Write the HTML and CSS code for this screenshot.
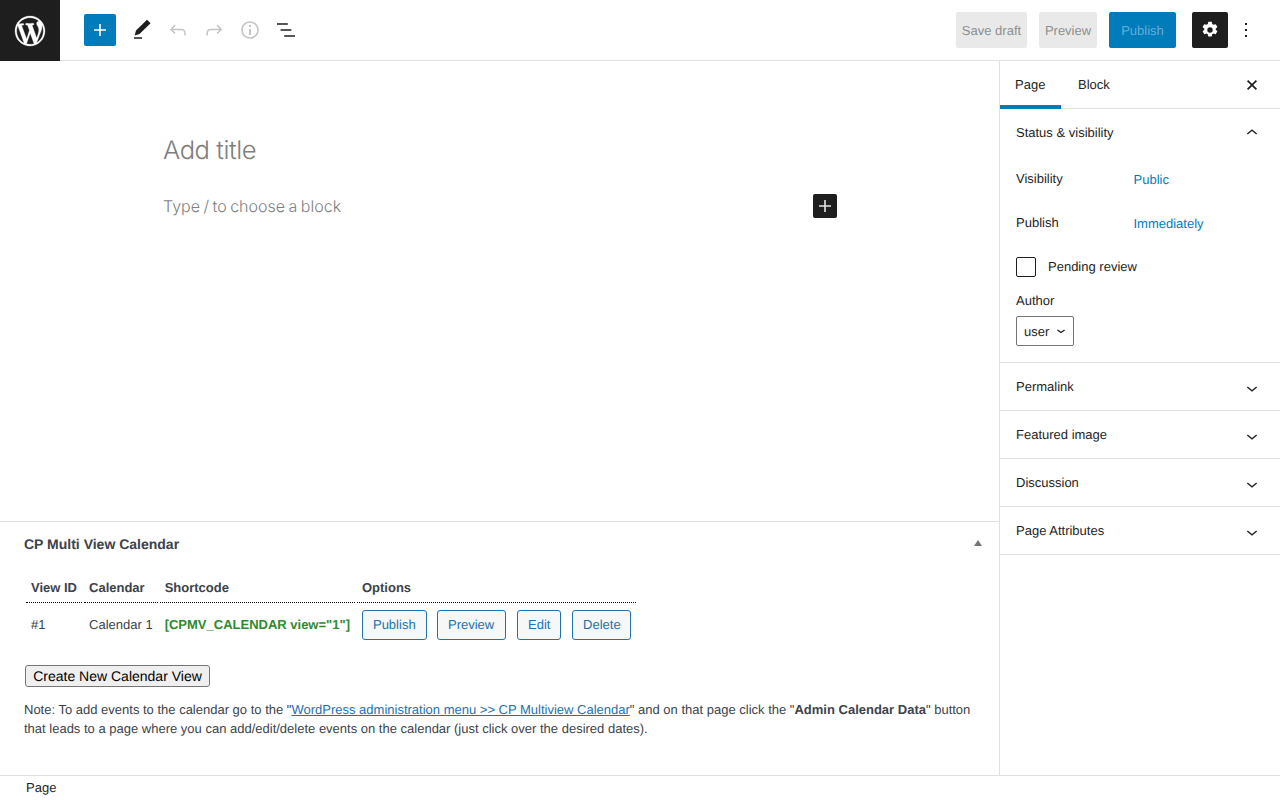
FILE: index.html
```html
<!DOCTYPE html>
<html lang="en">
<head>
<meta charset="utf-8">
<title>Edit Page</title>
<link rel="stylesheet" href="styles.css">
</head>
<body>
<div class="app">
  <header class="topbar">
    <div class="wp-logo">
      <svg width="36" height="36" viewBox="-2 -2 24 24"><path fill="#fff" stroke="#fff" stroke-width=".2" d="M20 10c0-5.51-4.49-10-10-10C4.48 0 0 4.49 0 10c0 5.52 4.48 10 10 10 5.51 0 10-4.48 10-10zM7.78 15.37L4.37 6.22c.55-.02 1.17-.08 1.17-.08.5-.06.44-1.13-.06-1.11 0 0-1.45.11-2.37.11-.18 0-.37 0-.58-.01C4.12 2.69 6.87 1.11 10 1.11c2.33 0 4.45.87 6.05 2.34-.68-.11-1.65.39-1.65 1.58 0 .74.45 1.36.9 2.1.35.61.55 1.36.55 2.46 0 1.49-1.4 5-1.4 5l-3.03-8.37c.54-.02.82-.17.82-.17.5-.05.44-1.25-.06-1.22 0 0-1.44.12-2.38.12-.87 0-2.33-.12-2.33-.12-.5-.03-.56 1.2-.06 1.22l.92.08 1.26 3.41zM17.41 10c.24-.64.74-1.87.43-4.25.7 1.29 1.05 2.71 1.05 4.25 0 3.29-1.73 6.24-4.4 7.78.97-2.59 1.94-5.2 2.92-7.78zM6.1 18.09C3.12 16.65 1.11 13.53 1.11 10c0-1.3.23-2.48.72-3.59C3.25 10.3 4.67 14.2 6.1 18.09zm4.03-6.63l2.58 6.98c-.86.29-1.76.45-2.71.45-.79 0-1.57-.11-2.29-.33.81-2.38 1.62-4.74 2.42-7.1z"/></svg>
    </div>
    <div class="tools">
      <span class="add-btn"><svg width="24" height="24" viewBox="0 0 24 24"><path fill="#fff" d="M18 11.2h-5.2V6h-1.6v5.2H6v1.6h5.2V18h1.6v-5.2H18z"/></svg></span>
      <span class="tool"><svg width="24" height="24" viewBox="0 0 24 24"><path fill="#1e1e1e" d="M20.6 5.2L17 1.8 6 12.6l-1.3 4.8 4.8-1.3zM4 20.8h8v-1.5H4v1.5z"/></svg></span>
      <span class="tool"><svg width="24" height="24" viewBox="0 0 24 24"><path fill="#c4c4c4" d="M18.3 11.7c-.6-.6-1.4-.9-2.3-.9H6.7l2.9-3.3-1.1-1-4.5 5L8.5 16l1-1-2.7-2.7H16c.5 0 .9.2 1.3.5 1 1 1 3.4 1 4.5v.3h1.5v-.2c0-1.5 0-4.3-1.5-5.7z"/></svg></span>
      <span class="tool"><svg width="24" height="24" viewBox="0 0 24 24"><path fill="#c4c4c4" d="M15.6 6.5l-1.1 1 2.9 3.3H8c-.9 0-1.7.3-2.3.9-1.4 1.5-1.4 4.2-1.4 5.6v.2h1.5v-.3c0-1.1 0-3.5 1-4.5.3-.3.7-.5 1.3-.5h9.2L14.5 15l1.1 1.1 4.6-4.6-4.6-5z"/></svg></span>
      <span class="tool"><svg width="24" height="24" viewBox="0 0 24 24"><path fill="#c4c4c4" d="M12 3.2c-4.8 0-8.8 3.9-8.8 8.8 0 4.8 3.9 8.8 8.8 8.8 4.8 0 8.8-3.9 8.8-8.8 0-4.8-4-8.8-8.8-8.8zm0 16c-4 0-7.2-3.3-7.2-7.2C4.8 8 8 4.8 12 4.8s7.2 3.3 7.2 7.2c0 4-3.2 7.2-7.2 7.2zM11 17h2v-6h-2v6zm0-8h2V7h-2v2z"/></svg></span>
      <span class="tool"><svg width="24" height="24" viewBox="0 0 24 24"><path fill="#1e1e1e" d="M13.8 5.2H3v1.5h10.8V5.2zm-3.6 12v1.5H21v-1.5H10.2zm7.2-6H6.6v1.5h10.8v-1.5z"/></svg></span>
    </div>
    <div class="actions">
      <span class="btn-grey save">Save draft</span>
      <span class="btn-grey prev">Preview</span>
      <span class="btn-publish">Publish</span>
      <span class="gear"><svg width="24" height="24" viewBox="0 0 24 24"><path fill="#fff" fill-rule="evenodd" d="M10.3 3.8h3.4l.5 2.3 1.3.75 2.2-.72 1.7 2.94-1.7 1.6v1.06l1.7 1.6-1.7 2.94-2.2-.72-1.3.75-.5 2.3h-3.4l-.5-2.3-1.3-.75-2.2.72-1.7-2.94 1.7-1.6v-1.06l-1.7-1.6 1.7-2.94 2.2.72 1.3-.75zM12 9.3a2.7 2.7 0 1 0 0 5.4 2.7 2.7 0 0 0 0-5.4z"/></svg></span>
      <span class="more"><svg width="24" height="24" viewBox="0 0 24 24"><path fill="#1e1e1e" d="M13 19h-2v-2h2v2zm0-6h-2v-2h2v2zm0-6h-2V5h2v2z"/></svg></span>
    </div>
  </header>
  <div class="workspace">
    <main class="editor">
      <div class="canvas">
        <div class="title">Add title</div>
        <div class="block-row">
          <span class="block-hint">Type / to choose a block</span>
          <span class="block-add"><svg width="24" height="24" viewBox="0 0 24 24"><path fill="#e4e4e4" d="M18 11.2h-5.2V6h-1.6v5.2H6v1.6h5.2V18h1.6v-5.2H18z"/></svg></span>
        </div>
      </div>
      <section class="metabox">
        <div class="metabox-head">
          <h2>CP Multi View Calendar</h2>
          <span class="caret"></span>
        </div>
        <table class="views">
          <thead>
            <tr><th>View ID</th><th>Calendar</th><th>Shortcode</th><th>Options</th></tr>
          </thead>
          <tbody>
            <tr>
              <td>#1</td>
              <td>Calendar 1</td>
              <td class="code">[CPMV_CALENDAR view="1"]</td>
              <td class="opts">
                <div class="opt-row"><a class="wp-btn">Publish</a><a class="wp-btn">Preview</a><a class="wp-btn">Edit</a><a class="wp-btn">Delete</a></div>
              </td>
            </tr>
          </tbody>
        </table>
        <button class="create" type="button">Create New Calendar View</button>
        <p class="note">Note: To add events to the calendar go to the "<a class="note-link">WordPress administration menu &gt;&gt; CP Multiview Calendar</a>" and on that page click the "<b>Admin Calendar Data</b>" button that leads to a page where you can add/edit/delete events on the calendar (just click over the desired dates).</p>
      </section>
    </main>
    <aside class="sidebar">
      <div class="tabs">
        <span class="tab active">Page</span>
        <span class="tab">Block</span>
        <span class="close"><svg width="24" height="24" viewBox="0 0 24 24"><path fill="none" stroke="#1e1e1e" stroke-width="1.7" d="M7.6 7.6l8.8 8.8M16.4 7.6l-8.8 8.8"/></svg></span>
      </div>
      <section class="panel open">
        <div class="panel-head">
          <span>Status &amp; visibility</span>
          <svg width="24" height="24" viewBox="0 0 24 24"><path fill="#1e1e1e" d="M6.9 12.4L12 8.2l5.1 4.2-.9 1.1L12 10.1l-4.2 3.4z"/></svg>
        </div>
        <div class="meta-row vis"><span class="meta-label">Visibility</span><span class="meta-link">Public</span></div>
        <div class="meta-row pub"><span class="meta-label">Publish</span><span class="meta-link">Immediately</span></div>
        <label class="pending"><span class="check"></span><span class="pending-text">Pending review</span></label>
        <div class="author-label">Author</div>
        <div class="select"><span>user</span><svg width="10" height="10" viewBox="0 0 10 10"><path fill="none" stroke="#1e1e1e" stroke-width="1.2" d="M1.4 4l3.6 2.6 3.6-2.6"/></svg></div>
      </section>
      <section class="panel"><div class="panel-head"><span>Permalink</span><svg class="chev" width="24" height="24" viewBox="0 0 24 24"><path fill="#1e1e1e" d="M17.1 11.6L12 15.8l-5.1-4.2.9-1.1 4.2 3.4 4.2-3.4z"/></svg></div></section>
      <section class="panel"><div class="panel-head"><span>Featured image</span><svg class="chev" width="24" height="24" viewBox="0 0 24 24"><path fill="#1e1e1e" d="M17.1 11.6L12 15.8l-5.1-4.2.9-1.1 4.2 3.4 4.2-3.4z"/></svg></div></section>
      <section class="panel"><div class="panel-head"><span>Discussion</span><svg class="chev" width="24" height="24" viewBox="0 0 24 24"><path fill="#1e1e1e" d="M17.1 11.6L12 15.8l-5.1-4.2.9-1.1 4.2 3.4 4.2-3.4z"/></svg></div></section>
      <section class="panel"><div class="panel-head"><span>Page Attributes</span><svg class="chev" width="24" height="24" viewBox="0 0 24 24"><path fill="#1e1e1e" d="M17.1 11.6L12 15.8l-5.1-4.2.9-1.1 4.2 3.4 4.2-3.4z"/></svg></div></section>
    </aside>
  </div>
  <footer class="statusbar">Page</footer>
</div>
</body>
</html>
```
FILE: styles.css
```css
* { box-sizing: border-box; }
html, body { margin: 0; height: 100%; overflow: hidden; background: #fff; }
body { font-family: "Liberation Sans", Arial, sans-serif; font-size: 13px; color: #1e1e1e; text-rendering: geometricPrecision; }
svg { display: block; flex: none; }
.app { display: flex; flex-direction: column; height: 800px; }

.topbar { display: flex; align-items: center; height: 61px; border-bottom: 1px solid #e0e0e0; flex: none; }
.wp-logo { width: 60px; height: 61px; margin-bottom: -1px; background: #1e1e1e; display: flex; align-items: center; justify-content: center; }
.tools { display: flex; align-items: center; margin-left: 24px; }
.add-btn { width: 32px; height: 32px; background: #007cba; border-radius: 2px; display: flex; align-items: center; justify-content: center; margin-right: 8px; }
.tool { width: 36px; height: 36px; display: flex; align-items: center; justify-content: center; }
.actions { margin-left: auto; display: flex; align-items: center; }
.btn-grey { height: 36px; display: flex; align-items: center; justify-content: center; background: #e9e9e9; color: #8f8f8f; border-radius: 2px; }
.save { width: 71px; margin-right: 12px; }
.prev { width: 58px; margin-right: 12px; }
.btn-publish { width: 67px; height: 36px; display: flex; align-items: center; justify-content: center; background: #007cba; color: #66aed8; border-radius: 2px; margin-right: 16px; }
.gear { width: 36px; height: 36px; background: #1e1e1e; border-radius: 2px; display: flex; align-items: center; justify-content: center; }
.more { width: 36px; height: 36px; display: flex; align-items: center; justify-content: center; margin-right: 16px; }

.workspace { flex: 1; display: flex; min-height: 0; }
.editor { flex: 1; min-width: 0; display: flex; flex-direction: column; justify-content: space-between; }
.canvas { height: 460px; padding: 71px 162px 0 163px; }
.title { font-family: Inter, sans-serif; font-weight: 300; font-size: 25.6px; line-height: 38px; color: #7e7e7e; letter-spacing: -.45px; }
.block-row { display: flex; align-items: center; justify-content: space-between; margin-top: 20px; height: 32px; }
.block-hint { font-family: Inter, sans-serif; font-weight: 300; font-size: 16px; color: #7e7e7e; word-spacing: -1px; }
.block-add { width: 24px; height: 24px; background: #1e1e1e; border-radius: 2px; }

.metabox { border-top: 1px solid #e0e0e0; height: 254px; padding: 0 24px; color: #3c434a; }
.metabox-head { display: flex; align-items: center; justify-content: space-between; height: 44px; }
.metabox-head h2 { margin: 0; font-size: 14px; font-weight: 700; color: #3c434a; }
.caret { width: 0; height: 0; border-left: 4px solid transparent; border-right: 4px solid transparent; border-bottom: 6px solid #72777c; margin: 0 -2px 2px 0; position: relative; left: 5px; }
.views { border-collapse: separate; border-spacing: 2px; margin-top: 5px; }
.views th { text-align: left; font-size: 13px; font-weight: 700; padding: 5px; height: 30px; border-bottom: 1px dotted #000; }
.views td { padding: 5px 5px 7px; font-size: 13px; white-space: nowrap; }
.views td.opts { padding: 5px; }
.opt-row { display: flex; gap: 11px; }
.code { font-weight: 700; color: #2e8b2e; }
.wp-btn { display: block; height: 30px; line-height: 28px; padding: 0 10px; font-size: 13px; color: #2271b1; background: #f6f7f7; border: 1px solid #2271b1; border-radius: 3px; }
.wp-btn:first-child { margin-right: -1px; }
.wp-btn:nth-child(2) { padding: 0 10.8px 0 10.4px; }
.wp-btn:nth-child(3) { margin-right: -.4px; }
.wp-btn:nth-child(4) { padding: 0 9.6px 0 10px; }
.create { display: block; margin: 18px 0 0 1px; height: 22px; width: 185px; padding: 0; font-family: "Liberation Sans", Arial, sans-serif; font-size: 14px; color: #000; background: #efefef; border: 1px solid #767676; border-radius: 3px; text-rendering: geometricPrecision; }
.note { margin: 13px 0 0; font-size: 13px; line-height: 19px; }
.note-link { color: #2271b1; text-decoration: underline; }

.sidebar { width: 281px; flex: none; border-left: 1px solid #e0e0e0; }
.tabs { display: flex; align-items: stretch; height: 48px; border-bottom: 1px solid #e0e0e0; position: relative; }
.tab { display: flex; align-items: center; padding: 0 16px 1px; height: 48px; }
.tab.active { width: 61px; padding-left: 15px; box-shadow: inset 0 -4px 0 #007cba; margin-right: 1px; }
.close { margin-left: auto; width: 24px; height: 24px; align-self: center; margin-right: 16px; }
.panel { border-bottom: 1px solid #e0e0e0; }
.panel-head { display: flex; align-items: center; justify-content: space-between; height: 47px; padding: 0 16px; }
.chev { transform: translateY(1px); }
.panel.open { height: 254px; }
.meta-row { display: flex; padding-left: 16px; }
.meta-label { width: 117.5px; }
.meta-link { color: #007cba; }
.vis { margin-top: 15px; height: 44px; }
.vis .meta-link, .pub .meta-link { position: relative; top: 1px; }
.pub { height: 42px; }
.pending { display: flex; align-items: center; gap: 12px; padding-left: 16px; height: 20px; }
.pending-text { margin-bottom: 2px; }
.check { width: 20px; height: 20px; border: 1px solid #1e1e1e; border-radius: 2px; }
.author-label { margin: 16px 0 0 16px; line-height: 16px; }
.select { display: flex; align-items: center; justify-content: space-between; width: 58px; height: 30px; margin: 7px 0 0 16px; padding: 0 7px; border: 1px solid #757575; border-radius: 2px; color: #1e1e1e; }

.statusbar { height: 25px; flex: none; border-top: 1px solid #e0e0e0; padding: 4px 0 0 26px; line-height: 15px; }
```
